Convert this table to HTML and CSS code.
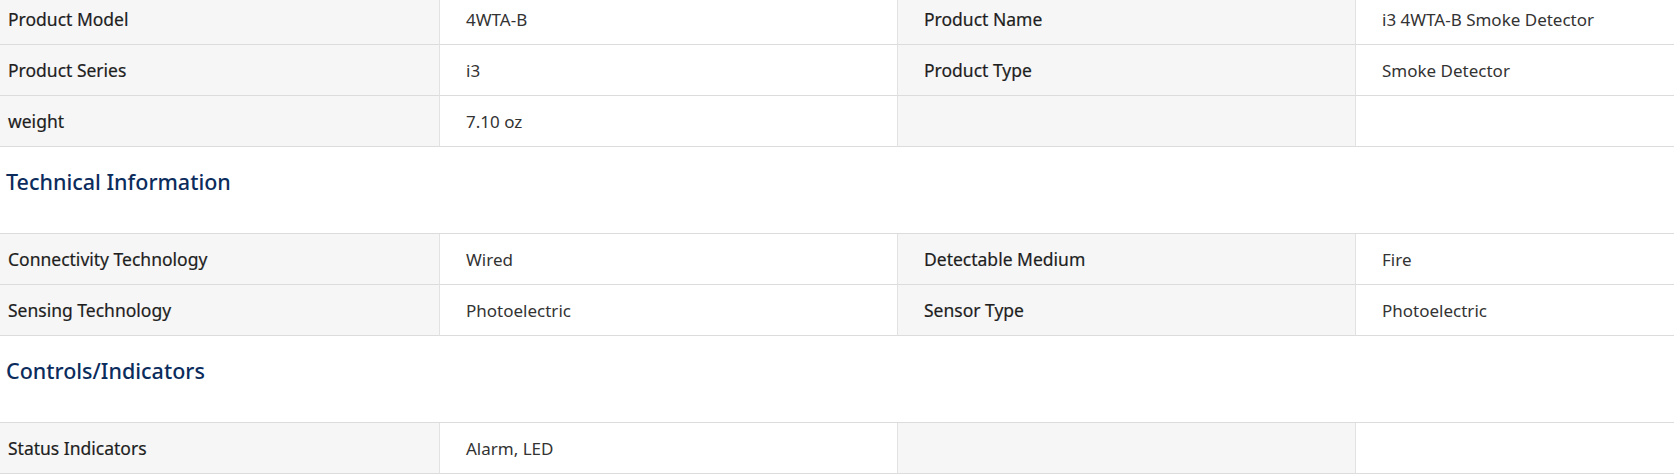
FILE: index.html
```html
<!DOCTYPE html>
<html lang="en">
<head>
<meta charset="utf-8">
<title>Specifications</title>
<link rel="stylesheet" href="styles.css">
</head>
<body>
<div class="specs">
  <div class="spec-table first">
    <div class="cell label">Product Model</div>
    <div class="cell value">4WTA-B</div>
    <div class="cell label">Product Name</div>
    <div class="cell value">i3 4WTA-B Smoke Detector</div>
    <div class="cell label">Product Series</div>
    <div class="cell value">i3</div>
    <div class="cell label">Product Type</div>
    <div class="cell value">Smoke Detector</div>
    <div class="cell label">weight</div>
    <div class="cell value">7.10 oz</div>
    <div class="cell label"></div>
    <div class="cell value"></div>
  </div>

  <h2 class="section-title">Technical Information</h2>
  <div class="spec-table">
    <div class="cell label">Connectivity Technology</div>
    <div class="cell value">Wired</div>
    <div class="cell label">Detectable Medium</div>
    <div class="cell value">Fire</div>
    <div class="cell label">Sensing Technology</div>
    <div class="cell value">Photoelectric</div>
    <div class="cell label">Sensor Type</div>
    <div class="cell value">Photoelectric</div>
  </div>

  <h2 class="section-title">Controls/Indicators</h2>
  <div class="spec-table">
    <div class="cell label">Status Indicators</div>
    <div class="cell value">Alarm, LED</div>
    <div class="cell label"></div>
    <div class="cell value"></div>
  </div>
</div>
</body>
</html>
```

FILE: styles.css
```css
html, body {
  margin: 0;
  padding: 0;
  background: #ffffff;
  overflow: hidden;
}

body {
  font-family: "Noto Sans", "Open Sans", sans-serif;
  color: #303030;
}

.specs {
  display: flex;
  flex-direction: column;
}

.spec-table {
  display: grid;
  grid-template-columns: 440px 458px 458px 1fr;
  border-top: 1px solid #dcdcdc;
}

.spec-table.first {
  margin-top: -7px;
}

.cell {
  height: 50px;
  display: flex;
  align-items: center;
  padding-left: 26px;
  border-bottom: 1px solid #dcdcdc;
  font-size: 17px;
  white-space: nowrap;
}

.cell.label {
  background: #f6f6f6;
  border-right: 1px solid #e2e2e2;
  color: #1e1e1e;
  font-size: 17.5px;
  font-weight: 400;
  -webkit-text-stroke: 0.2px #1e1e1e;
}

.cell.value {
  background: #ffffff;
  color: #333333;
  font-weight: 400;
}

.cell.value:nth-child(4n+2) {
  border-right: 1px solid #e2e2e2;
}

.cell:nth-child(4n+1) {
  padding-left: 8px;
}

.section-title {
  margin: 0;
  padding: 20px 0 36px 6px;
  height: 30px;
  line-height: 30px;
  font-size: 21.5px;
  font-weight: 500;
  color: #0b2c5c;
}
```
